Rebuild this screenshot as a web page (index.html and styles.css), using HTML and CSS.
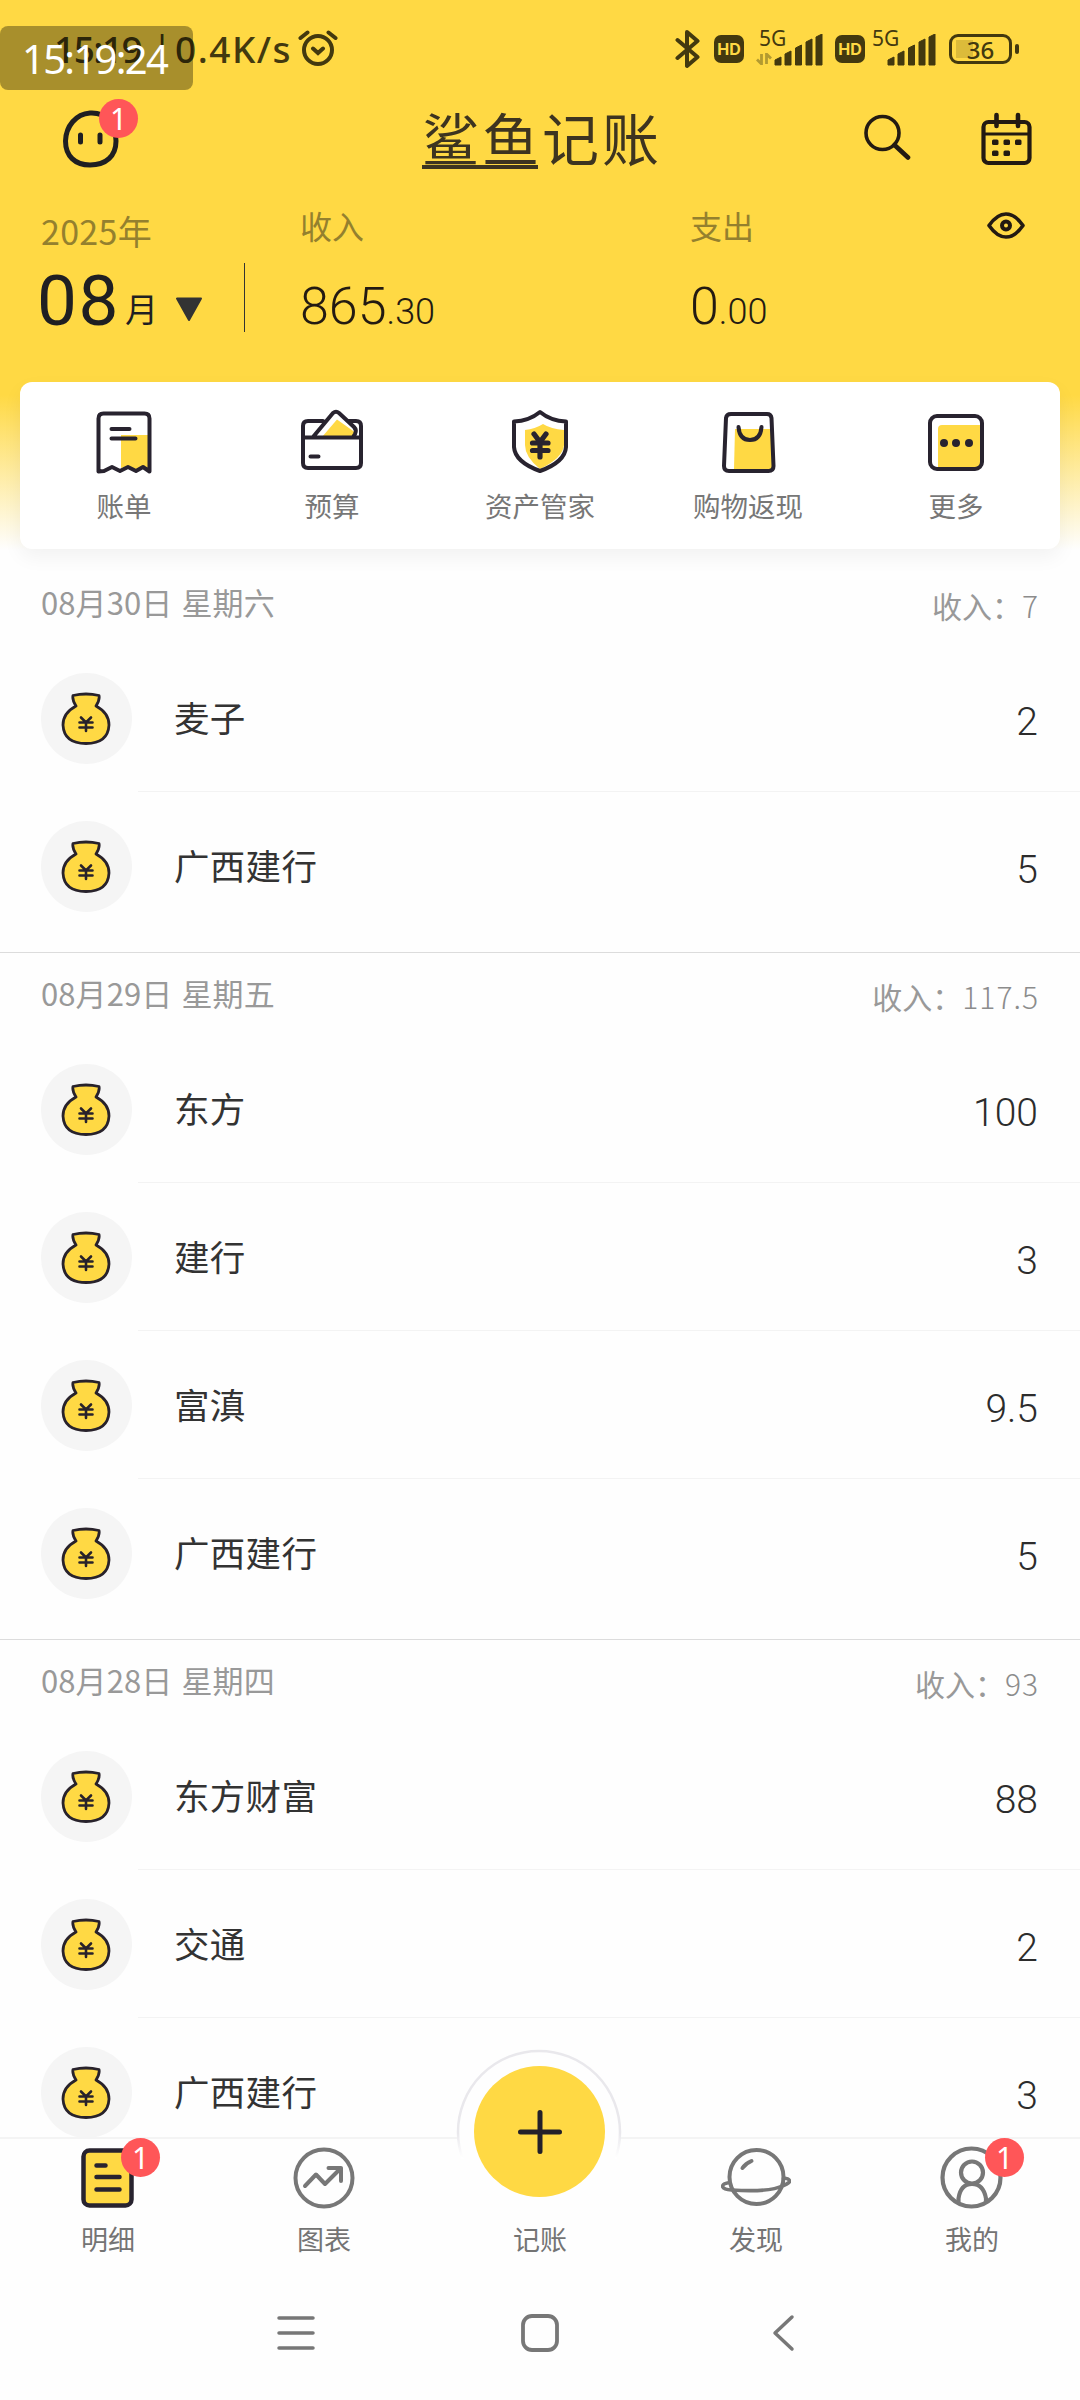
FILE: index.html
```html
<!DOCTYPE html>
<html lang="zh-CN">
<head>
<meta charset="utf-8">
<title>鲨鱼记账</title>
<link rel="stylesheet" href="styles.css">
</head>
<body>
<svg width="0" height="0" class="defs">
  <symbol id="bag" viewBox="0 0 50 54">
    <path d="M12 3.5Q25 .5 38 3.5Q39 8 35 14Q48 21 48 33Q47 51.500 25 51.500Q3 51.500 2 33Q2 21 15 14Q11 8 12 3.500Z" fill="#ffd944" stroke="#28222b" stroke-width="2.800" stroke-linejoin="round"/>
    <path d="M20 25.500l5 5 5-5M18.500 30.500h13M18.500 35.500h13M25 30.500v8.500" fill="none" stroke="#28222b" stroke-width="2.600" stroke-linecap="round"/>
  </symbol>
  <symbol id="signal" viewBox="0 0 49 32">
    <path d="M1 31v-5l6-3v8zM11 31V20l6-3v14zM21.500 31V14l6-3v20zM32 31V8l6-3v26zM42 31V3l6-3v31z" fill="#43390f" stroke="#43390f" stroke-width="1" stroke-linejoin="round"/>
  </symbol>
</svg>
<div class="screen">
  <header class="top">
    <div class="status">
      <div class="clock"><span class="time">15:19</span><span class="bar">|</span><span class="speed">0.4K/s</span></div>
      <svg class="alarm" width="40" height="37" viewBox="0 0 40 37" fill="none" stroke="#43390f" stroke-width="4" stroke-linecap="round"><circle cx="20" cy="20" r="14"/><path d="M2.500 8l7-5.500M37.500 8l-7-5.500M15 18.500l5 4.500 5-4.500"/></svg>
      <div class="tray">
        <svg width="26" height="40" viewBox="0 0 26 40" fill="none" stroke="#43390f" stroke-width="4" stroke-linejoin="round" stroke-linecap="round"><path d="M2.500 11l20 17L12 37V3l10.500 9L2.500 29"/></svg>
        <span class="hd">HD</span>
        <span class="net"><i>5G</i><svg class="arrows" width="16" height="12" viewBox="0 0 16 12" fill="none" stroke="#b39a30" stroke-width="2.800"><path d="M5.500 1v10L1 6.500M10.500 11V1l4.500 4.500"/></svg><svg class="bars" width="49" height="32"><use href="#signal"/></svg></span>
        <span class="hd second">HD</span>
        <span class="net"><i>5G</i><svg class="bars" width="49" height="32"><use href="#signal"/></svg></span>
        <span class="battery">36</span>
      </div>
      <div class="stamp">15:19:24</div>
    </div>
    <div class="titlebar">
      <div class="avatar">
        <svg width="56" height="58" viewBox="0 0 56 58"><path d="M27 3C43 2 53 14 53 31C53 46 43 55 27 55C12 55 2.500 46 2.500 31C3 16 13 4 27 3Z" fill="none" stroke="#1f1f22" stroke-width="5"/><path d="M17.500 25v7M37 25v7" stroke="#1f1f22" stroke-width="5" stroke-linecap="round"/></svg>
        <span class="badge">1</span>
      </div>
      <h1 class="logo"><span class="under">鲨鱼</span><span>记账</span></h1>
      <svg class="search" width="48" height="48" viewBox="0 0 48 48" fill="none" stroke="#231a12" stroke-linecap="round"><circle cx="19.500" cy="19" r="16.500" stroke-width="3.600"/><path d="M31.500 31L45 43.500" stroke-width="4.600"/></svg>
      <svg class="calendar" width="52" height="54" viewBox="0 0 52 54" fill="none" stroke="#231a12"><rect x="2.500" y="10" width="46" height="41" rx="5" stroke-width="4.200"/><path d="M3 22h46" stroke-width="3"/><path d="M15.500 3v11M37 3v11" stroke-width="4.600" stroke-linecap="round"/><g fill="#231a12" stroke="none"><rect x="11" y="27.500" width="6.500" height="5.500" rx="1.500"/><rect x="22.500" y="27.500" width="6.500" height="5.500" rx="1.500"/><rect x="34" y="27.500" width="6.500" height="5.500" rx="1.500"/><rect x="11" y="38.500" width="6.500" height="5.500" rx="1.500"/><rect x="22.500" y="38.500" width="6.500" height="5.500" rx="1.500"/></g></svg>
    </div>
    <div class="summary">
      <div class="month">
        <div class="label year">2025年</div>
        <div class="picker"><b>08</b><span>月</span><svg width="28" height="25" viewBox="0 0 28 25"><path d="M2 1.500h24L14 23z" fill="#333" stroke="#333" stroke-width="2" stroke-linejoin="round"/></svg></div>
      </div>
      <div class="rule"></div>
      <div class="sum income"><div class="label">收入</div><div class="money">865<small>.30</small></div></div>
      <div class="sum"><div class="label">支出</div><div class="money">0<small>.00</small></div></div>
      <svg class="eye" width="38" height="27" viewBox="0 0 38 27" fill="none" stroke="#231a12" stroke-width="4"><path d="M2 13.500Q10 2 19 2T36 13.500Q28 25 19 25T2 13.500Z" stroke-linejoin="round" stroke-width="3.600"/><circle cx="19" cy="13.500" r="4"/></svg>
    </div>
  </header>

  <nav class="tools">
    <a><svg width="64" height="70" viewBox="0 0 64 70"><path d="M29 29h29v35l-5-4-8 4-8-4-8 2z" fill="#ffd944"/><path d="M7 66V13q0-5 5-5h41q5 0 5 5v53l-6.500-4.500-7 4-8-4-8 4-8-4-8 4z" transform="translate(-.5 -.5)" fill="none" stroke="#28232f" stroke-width="4" stroke-linejoin="round"/><path d="M19 23h18M19 32.500h24" transform="translate(.5 0)" stroke="#28232f" stroke-width="4" stroke-linecap="round"/></svg>账单</a>
    <a><svg width="64" height="70" viewBox="0 0 64 70" fill="none" stroke="#28232f" stroke-width="4" stroke-linejoin="round" stroke-linecap="round"><path d="M22 31L37 13.500 56 27v4z" fill="#ffd944" stroke="none"/><path d="M23 15H8q-5 0-5 5v37q0 5 5 5h48q5 0 5-5V20q0-5-5-5h-7M3 31.500h58M13 31l20-24q3-2.500 6 0l15 14q3 3 1 7l-2 3M10.500 50.500h8"/></svg>预算</a>
    <a><svg width="64" height="70" viewBox="0 0 64 70"><path d="M17 24q10-1 18-6 8 5 21 6v15q-1 13-24 24Q17 51 17 39z" fill="#ffd944"/><path d="M32 6Q43 15 58 15.500V41Q57 56 32 65Q7 56 6 41V15.500Q21 15 32 6Z" fill="none" stroke="#28232f" stroke-width="4" stroke-linejoin="round"/><path d="M26 28l6 8 6-8M24.500 37h15.500M24.500 44.500h15.500M32 37v14" stroke="#28232f" stroke-width="5.200" fill="none" stroke-linecap="round"/></svg>资产管家</a>
    <a><svg width="64" height="70" viewBox="0 0 64 70"><path d="M19 23h36l2 40H18z" fill="#ffd944"/><path d="M15 8h36q4 0 4.500 4l2 48q0 5-5 5H13q-5 0-5-5l2-48q.5-4 5-4Z" fill="none" stroke="#28232f" stroke-width="4"/><path d="M22.500 21q1 13 11.500 13T45.500 21" fill="none" stroke="#28232f" stroke-width="4" stroke-linecap="round"/></svg>购物返现</a>
    <a><svg width="64" height="70" viewBox="0 0 64 70"><path d="M14 23q0-4 4-4h38v43H14z" fill="#ffd944"/><rect x="6" y="10" width="52" height="53" rx="7" fill="none" stroke="#28232f" stroke-width="4"/><g fill="#28232f"><circle cx="20" cy="37" r="4"/><circle cx="32" cy="37" r="4"/><circle cx="45" cy="37" r="4"/></g></svg>更多</a>
  </nav>

  <main class="list">
    <section>
      <div class="day"><span>08月30日 星期六</span><em>收入：<u>7</u></em></div>
      <div class="row"><span class="ico"><svg width="50" height="54"><use href="#bag"/></svg></span><div class="cell"><span>麦子</span><b>2</b></div></div>
      <div class="row"><span class="ico"><svg width="50" height="54"><use href="#bag"/></svg></span><div class="cell"><span>广西建行</span><b>5</b></div></div>
    </section>
    <section>
      <div class="day"><span>08月29日 星期五</span><em>收入：<u>117.5</u></em></div>
      <div class="row"><span class="ico"><svg width="50" height="54"><use href="#bag"/></svg></span><div class="cell"><span>东方</span><b>100</b></div></div>
      <div class="row"><span class="ico"><svg width="50" height="54"><use href="#bag"/></svg></span><div class="cell"><span>建行</span><b>3</b></div></div>
      <div class="row"><span class="ico"><svg width="50" height="54"><use href="#bag"/></svg></span><div class="cell"><span>富滇</span><b>9.5</b></div></div>
      <div class="row"><span class="ico"><svg width="50" height="54"><use href="#bag"/></svg></span><div class="cell"><span>广西建行</span><b>5</b></div></div>
    </section>
    <section>
      <div class="day"><span>08月28日 星期四</span><em>收入：<u>93</u></em></div>
      <div class="row"><span class="ico"><svg width="50" height="54"><use href="#bag"/></svg></span><div class="cell"><span>东方财富</span><b>88</b></div></div>
      <div class="row"><span class="ico"><svg width="50" height="54"><use href="#bag"/></svg></span><div class="cell"><span>交通</span><b>2</b></div></div>
      <div class="row"><span class="ico"><svg width="50" height="54"><use href="#bag"/></svg></span><div class="cell"><span>广西建行</span><b>3</b></div></div>
    </section>
  </main>

  <footer class="bottom">
    <div class="tabs">
      <a><svg width="70" height="64" viewBox="0 0 70 64"><rect x="10.500" y="4.500" width="48" height="55" rx="6" fill="#ffd944" stroke="#28232f" stroke-width="4.500"/><path d="M23.500 19.500h9M23.500 31h23M23.500 43.500h23" stroke="#28232f" stroke-width="4.500" stroke-linecap="round"/></svg><span class="badge">1</span>明细</a>
      <a><svg width="70" height="64" viewBox="0 0 70 64" fill="none" stroke="#777" stroke-width="4" stroke-linecap="round" stroke-linejoin="round"><circle cx="35" cy="32" r="28.500"/><path d="M16 40l11-11.500 9 9.500L52 22M39.500 22H52V35"/></svg>图表</a>
      <a class="add"><svg class="fab" width="166" height="110" viewBox="0 0 166 110"><defs><linearGradient id="ring" gradientUnits="userSpaceOnUse" x1="0" y1="84" x2="0" y2="109"><stop offset="0" stop-color="#e9e8ec"/><stop offset="1" stop-color="#fff"/></linearGradient></defs><circle cx="83" cy="83" r="81" fill="#fefefe" stroke="url(#ring)" stroke-width="2.500"/></svg><span class="disc"><svg width="44" height="44" viewBox="0 0 44 44"><path d="M22 2.500v39M2.500 22h39" stroke="#23202a" stroke-width="5" stroke-linecap="round"/></svg></span>记账</a>
      <a><svg width="70" height="64" viewBox="0 0 70 64" fill="none" stroke="#777" stroke-width="4" stroke-linecap="round"><circle cx="35.500" cy="31" r="27"/><path d="M8.500 36.500q-7 1-7 4 1 3 9 3.500 38 2.500 52-4.500 7-3 6-5t-6-2.500" stroke-width="3.600"/><path d="M21.500 22q3-4.500 9-7"/></svg>发现</a>
      <a><svg width="70" height="64" viewBox="0 0 70 64" fill="none" stroke="#777" stroke-width="4.200"><circle cx="34.500" cy="31.500" r="29"/><circle cx="35" cy="26.500" r="11"/><path d="M21.500 57V52.500q2-14.500 13.500-14.500t14 14.500V57"/></svg><span class="badge">1</span>我的</a>
    </div>
    <div class="sysnav">
      <svg width="38" height="38" viewBox="0 0 38 38" stroke="#777" stroke-width="3.500" stroke-linecap="round"><path d="M2 4h34M2 19h34M2 34h34"/></svg>
      <svg width="40" height="40" viewBox="0 0 40 40" fill="none" stroke="#777" stroke-width="3.800"><rect x="3" y="3" width="34" height="34" rx="9"/></svg>
      <svg width="38" height="38" viewBox="0 0 38 38" fill="none" stroke="#777" stroke-width="3.500" stroke-linecap="round" stroke-linejoin="round"><path d="M27 3L10 19l17 16"/></svg>
    </div>
  </footer>
</div>
</body>
</html>
```
FILE: styles.css
```css
* { box-sizing: border-box; }
body { margin: 0; background: #fff; }
i, em, b, u { font-style: normal; font-weight: inherit; text-decoration: none; }
svg { display: block; flex: none; }
.defs { position: absolute; }

.screen {
  width: 1080px;
  height: 2400px;
  overflow: hidden;
  display: flex;
  flex-direction: column;
  font-family: "Noto Sans CJK SC", sans-serif;
  font-weight: 400;
  background: linear-gradient(#ffd944 0, #ffd944 395px, #fefefe 550px);
}

.top { height: 382px; flex: none; }

.status { position: relative; height: 98px; display: flex; color: #43390f; padding-left: 54px; }
.clock { display: flex; width: 244px; font: 500 37px/97px "Noto Sans", sans-serif; white-space: nowrap; }
.time { width: 95px; letter-spacing: -1.500px; }
.bar { width: 26px; text-align: center; font-size: 31px; line-height: 90px; }
.speed { letter-spacing: 1.500px; }
.alarm { margin-top: 30px; }
.tray { display: flex; margin-left: 337px; padding-top: 29px; }
.hd {
  width: 30px; height: 28px; margin: 6px 0 0 13px; border-radius: 7px;
  background: #43390f; color: #ffd944;
  font: 700 16px/29px Inter, sans-serif; text-align: center;
}
.hd.second { margin-left: 12px; }
.net { position: relative; width: 68px; margin-left: 11px; }
.net i { position: absolute; left: 4px; top: -3px; font: 400 21px/24px "Noto Sans", sans-serif; }
.hd.second + .net { margin-left: 3px; }
.net .arrows { position: absolute; left: 1px; top: 24px; }
.net .bars { position: absolute; right: 0; top: 5px; }
.battery {
  position: relative; width: 63px; height: 30px; margin: 5px 0 0 13px;
  border: 3px solid #43390f; border-radius: 9px;
  font: 500 24px/25px "Noto Sans", sans-serif; text-align: center;
  background: linear-gradient(#dcbb3a, #dcbb3a) 4px 3px / 17px 18px no-repeat;
}
.battery::after { content: ""; position: absolute; right: -10px; top: 7px; width: 4px; height: 10px; border-radius: 2px; background: #43390f; }
.stamp {
  position: absolute; left: 0; top: 26px; width: 193px; height: 64px; padding-left: 22px;
  border-radius: 8px; background: rgba(0, 0, 0, .34); color: #fff;
  font: 400 40px/66px "Noto Sans", sans-serif; letter-spacing: -1.700px;
}

.titlebar { height: 90px; display: flex; padding-left: 63px; }
.avatar { position: relative; width: 56px; margin-top: 12px; }
.badge {
  position: absolute; width: 39px; height: 39px; border-radius: 50%;
  background: #ff5658; color: #fff; text-align: center;
  font: 400 30px/39px "Noto Sans", sans-serif;
}
.avatar .badge { left: 36px; top: -11px; }
.logo { display: flex; align-items: flex-start; gap: 4px; margin: 8px 0 0 303px; width: 441px; font-size: 57px; line-height: 60px; font-weight: 400; letter-spacing: 3px; color: #3d3420; white-space: nowrap; }
.logo .under { width: 116px; height: 63px; border-bottom: 4px solid #3d3420; }
.search { margin-top: 16px; }
.calendar { margin: 14px 0 0 70px; }

.summary { height: 190px; display: flex; }
.label { font-size: 32px; line-height: 40px; color: #94802e; }
.month { width: 244px; padding: 23px 0 0 41px; }
.year { font-size: 34px; letter-spacing: .3px; }
.picker { display: flex; align-items: flex-end; color: #1f1f22; margin-top: 14px; }
.picker b { font: 400 71px/72px Roboto, sans-serif; letter-spacing: 1.500px; margin: 0 0 -7px -4px; width: 88px; }
.picker span { font-size: 33px; line-height: 40px; margin-bottom: 2px; width: 34px; }
.picker svg { margin: 0 0 8px 16px; }
.rule { width: 1px; height: 69px; margin-top: 75px; background: #333; }
.sum { width: 297px; padding-top: 17px; }
.sum.income { width: 390px; margin-left: 55px; }
.money { font: 300 52px/60px Roboto, sans-serif; color: #231a12; margin-top: 32px; }
.money small { font-size: 36px; letter-spacing: 0; }
.eye { margin-top: 24px; }

.tools {
  height: 167px; flex: none; margin: 0 20px; display: flex;
  background: #fff; border-radius: 12px; box-shadow: 0 8px 20px rgba(0, 0, 0, .05);
}
.tools a { width: 208px; padding-top: 24px; display: flex; flex-direction: column; align-items: center; font-size: 27.500px; line-height: 40px; color: #777; }
.tools svg { margin-bottom: 9px; }

.list { height: 1588px; flex: none; padding-top: 13px; overflow: hidden; }
section { padding-bottom: 12px; border-bottom: 1px solid #dcdcdc; }
.day { height: 82px; padding: 20px 42px 0 41px; display: flex; justify-content: space-between; color: #999; white-space: nowrap; }
.day span { font-size: 31px; line-height: 40px; letter-spacing: .1px; word-spacing: 2px; }
.day em { font-size: 30px; line-height: 40px; padding-top: 3px; }
.day u { font-weight: 300; letter-spacing: 1px; margin-right: -1px; color: #8c8c8c; }
.row { height: 148px; display: flex; padding-left: 41px; }
.ico { width: 91px; height: 91px; margin: 29px 6px 0 0; border-radius: 50%; background: #f5f5f5; display: flex; align-items: center; justify-content: center; padding-right: 1px; }
.cell { flex: 1; display: flex; justify-content: space-between; padding: 0 42px 0 36px; border-bottom: 1px solid #f3f3f3; color: #333; }
.row:last-child .cell { border-bottom-color: transparent; }
.cell span { font-size: 35.500px; line-height: 146px; letter-spacing: .3px; }
.cell b { font: 300 39px/156px Roboto, sans-serif; color: #2c2c2c; }

.bottom { height: 263px; flex: none; background: #fefefe; border-top: 2px solid #f4f4f4; }
.tabs { height: 150px; display: flex; }
.tabs a { position: relative; width: 216px; padding-top: 7px; display: flex; flex-direction: column; align-items: center; font-size: 27px; line-height: 40px; color: #747474; }
.tabs a > svg:first-child:not(.fab) { margin-bottom: 9px; }
.tabs .badge { left: 121px; top: -1px; }
.tabs .add { padding-top: 80px; }
.fab { position: absolute; left: 24px; top: -90px; }
.disc { position: absolute; left: 42px; top: -73px; width: 131px; height: 131px; border-radius: 50%; background: #ffd944; display: flex; align-items: center; justify-content: center; }
.sysnav { display: flex; justify-content: center; align-items: center; gap: 205px; height: 87px; padding-right: 1px; }
```
